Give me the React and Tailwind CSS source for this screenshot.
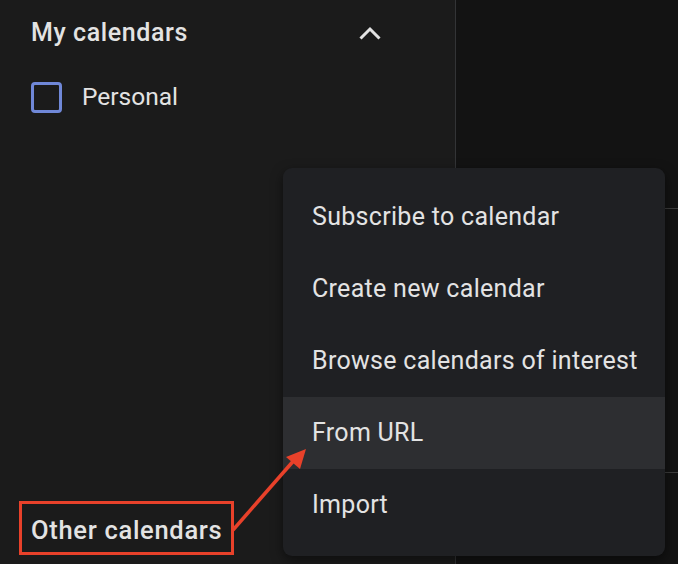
import React from "react";

const items = [
    "Subscribe to calendar",
    "Create new calendar",
    "Browse calendars of interest",
    "From URL",
    "Import",
];

export default function App() {
    return (
        <div
            className="relative flex h-[564px] w-[678px] overflow-hidden bg-[#131313] text-[#e3e3e3]"
            style={{ fontFamily: "Roboto, 'Noto Sans', sans-serif" }}
        >
            {/* sidebar */}
            <div className="flex h-full w-[456px] shrink-0 flex-col border-r border-[#333436] bg-[#1b1b1b] pl-[31px]">
                <div className="mt-[15px] flex h-[36px] items-center justify-between pr-[73px]">
                    <span className="text-[25px] font-medium tracking-[0.6px]">My calendars</span>
                    <svg width="24" height="16" viewBox="0 0 24 16" fill="none">
                        <path d="M2.5 13.5 L12 4 L21.5 13.5" stroke="#e3e3e3" strokeWidth="3" />
                    </svg>
                </div>
                <div className="mt-[28px] flex items-center gap-[20px]">
                    <div className="h-[31px] w-[31px] rounded-[4px] border-[3px] border-[#7088d8]" />
                    <span className="text-[24.5px]">Personal</span>
                </div>
                <div className="mt-auto mb-[16px] flex h-[36px] items-center">
                    <span className="text-[25.5px] font-medium tracking-[0.7px]">Other calendars</span>
                </div>
            </div>

            {/* calendar grid */}
            <div className="flex-1">
                <div className="h-[209px] border-b border-[#3c3c3c]" />
                <div className="h-[264px] border-b border-[#3c3c3c]" />
            </div>

            {/* dropdown menu */}
            <div className="absolute left-[283px] top-[168px] w-[382px] rounded-[9px] bg-[#1f2023] pt-[13px] pb-[15px] shadow-[0_4px_12px_rgba(0,0,0,0.5)]">
                {items.map((label) => (
                    <div
                        key={label}
                        className={
                            "flex h-[72px] items-center pl-[29px] text-[25px] tracking-[0.3px] " +
                            (label === "From URL" ? "bg-[#2d2e31]" : "")
                        }
                    >
                        {label}
                    </div>
                ))}
            </div>

            {/* annotation */}
            <div className="absolute left-[19px] top-[501px] h-[54px] w-[215px] border-[3px] border-[#e8412a]" />
            <svg className="absolute left-0 top-0" width="678" height="564" viewBox="0 0 678 564">
                <line x1="233" y1="530" x2="296" y2="458" stroke="#e8412a" strokeWidth="3.5" />
                <polygon points="306,449 286,457 300,469" fill="#e8412a" />
            </svg>
        </div>
    );
}
